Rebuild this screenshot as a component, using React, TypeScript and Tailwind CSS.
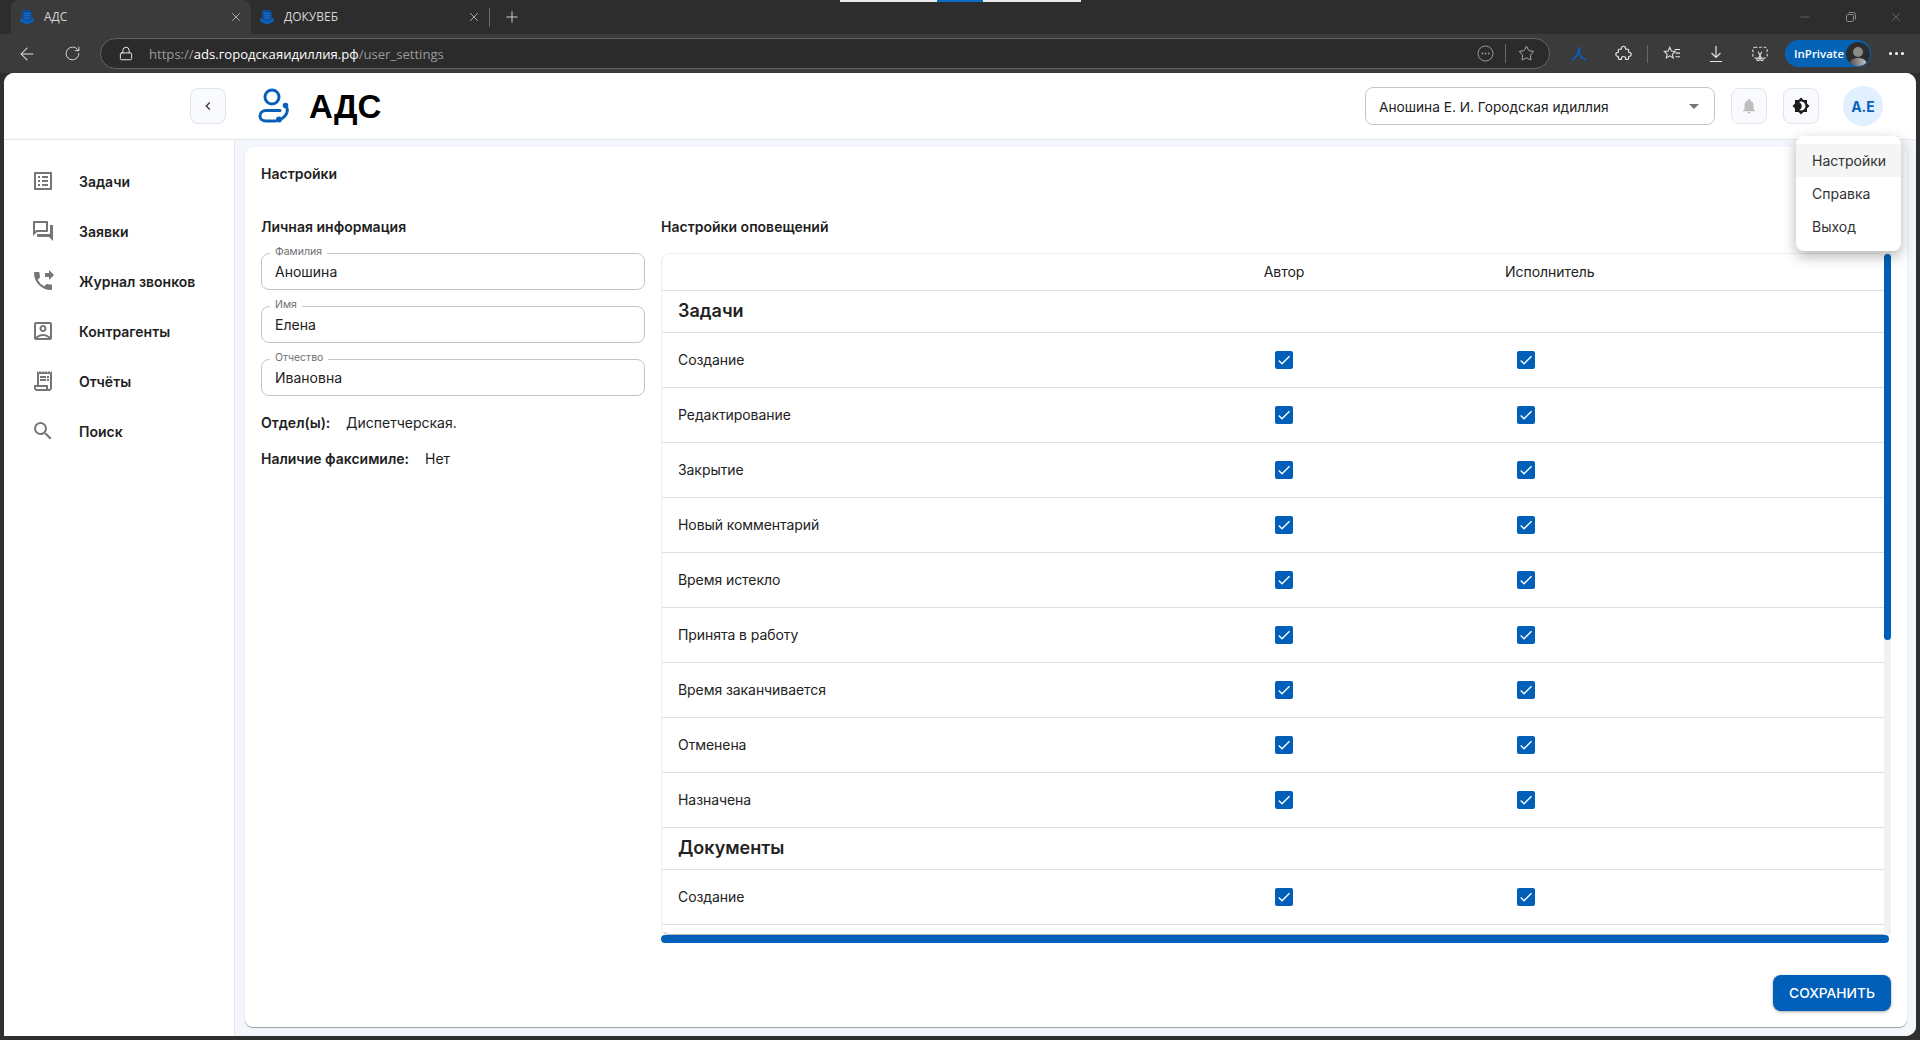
import React from "react";
import { ArrowLeft, RotateCw, Lock, Star, X, Plus, Minus } from "lucide-react";
import {
  MdOutlineListAlt,
  MdOutlineQuestionAnswer,
  MdPhoneForwarded,
  MdOutlineAccountBox,
  MdOutlineReceiptLong,
  MdSearch,
  MdChevronLeft,
  MdNotifications,
  MdBrightness4,
  MdArrowDropDown,
  MdCheck,
} from "react-icons/md";

const Favicon = () => (
  <svg width="16" height="16" viewBox="0 0 16 16" className="shrink-0">
    <path d="M1.500 8.500V12.800L8 15.500 14.500 12.800V8.500L8 11.500z" fill="#0a62ba" />
    <path d="M3 1h7.500L13 3.500V10.500L8 12.600 3 10.500z" fill="#0b4f9e" />
    <path d="M5 4.500h6M5 6.800h6M5 9.100h6" stroke="#2f7fce" strokeWidth="0.8" />
  </svg>
);

const Tab = ({ title, active }: { title: string; active?: boolean }) => (
  <div className={`flex h-full w-[240px] items-center pl-[8px] ${active ? "rounded-t-lg bg-[#3b3b3b] pr-[8px]" : "pr-[10px]"}`}>
    <Favicon />
    <span className="ml-[9px] flex-1 text-[12px] text-[#d6d6d6]">{title}</span>
    <X size={14} strokeWidth={1.25} className="text-[#d6d6d6]" />
  </div>
);

const TabBar = () => (
  <div className="relative flex h-[34px] shrink-0 items-stretch bg-[#2d2d2d] pl-[11px]">
    <Tab title="АДС" active />
    <Tab title="ДОКУВЕБ" />
    <div className="ml-[-2px] mt-[8px] h-[19px] w-px bg-[#6a6a6a]" />
    <div className="ml-[13px] flex items-center">
      <Plus size={18} strokeWidth={1.25} className="text-[#d8d8d8]" />
    </div>
    <div className="flex-1" />
    <div className="flex w-[138px] items-center text-[#8c8c8c]">
      <div className="flex w-[46px] justify-center">
        <Minus size={14} strokeWidth={1} />
      </div>
      <div className="flex w-[46px] justify-center">
        <svg width="12" height="12" viewBox="0 0 12 12" fill="none" stroke="currentColor">
          <rect x="1.5" y="3.5" width="7" height="7" rx="1" />
          <path d="M3.5 1.5h5a2 2 0 0 1 2 2v5" />
        </svg>
      </div>
      <div className="flex w-[46px] justify-center pr-[2px]">
        <X size={14} strokeWidth={1} />
      </div>
    </div>
    <div className="absolute left-[840px] top-0 flex h-[2px] w-[241px] bg-[#e8e8e8]">
      <div className="ml-[97px] h-full w-[46px] bg-[#0a6cc4]" />
    </div>
  </div>
);

const ToolSlot = ({ children }: { children: React.ReactNode }) => (
  <div className="flex w-[44px] shrink-0 items-center justify-center text-[#e4e4e4]">{children}</div>
);

const Toolbar = () => (
  <div className="flex h-[39px] shrink-0 items-center bg-[#3b3b3b] pl-[10px]" style={{ fontFamily: "'Open Sans', sans-serif" }}>
    <div className="flex w-[34px] justify-center text-[#e4e4e4]">
      <ArrowLeft size={20} strokeWidth={1.25} />
    </div>
    <div className="ml-[10px] flex w-[36px] justify-center text-[#e4e4e4]">
      <RotateCw size={17} strokeWidth={1.25} />
    </div>
    <div className="ml-[10px] flex h-[31px] w-[1450px] shrink-0 items-center rounded-full border border-[#636363] bg-[#2b2b2b] pl-[17px] pr-[14px]">
      <Lock size={15} strokeWidth={1.5} className="w-[16px] text-[#efefef]" />
      <span className="ml-[15px] pt-[2px] text-[13.1px] text-[#9a9a9a]">
        https://<span className="text-white">ads.городскаяидиллия.рф</span>/user_settings
      </span>
      <div className="flex-1" />
      <svg width="17" height="17" viewBox="0 0 17 17" fill="none" className="text-[#9c9c9c]">
        <circle cx="8.5" cy="8.5" r="7.5" stroke="currentColor" />
        <circle cx="5.3" cy="8.5" r="0.9" fill="currentColor" />
        <circle cx="8.5" cy="8.5" r="0.9" fill="currentColor" />
        <circle cx="11.7" cy="8.5" r="0.9" fill="currentColor" />
      </svg>
      <div className="ml-[11px] h-[19px] w-px bg-[#6a6a6a]" />
      <Star size={17} strokeWidth={1.25} className="ml-[12px] text-[#bdbdbd]" />
    </div>
    <div className="ml-[7px]" />
    <ToolSlot>
      <svg width="16" height="16" viewBox="0 0 18 18" fill="none" stroke="#0a5cc0" strokeWidth="2" strokeLinecap="round">
        <path d="M1.500 15c3-1 5-4 6.500-7.500C9 5 8.500 2.500 9 2c.6-.5 1.500 2 .2 5.500" />
        <path d="M8.500 8c1.500 3 3.500 6 7.500 7" />
      </svg>
    </ToolSlot>
    <ToolSlot>
      <svg width="17" height="17" viewBox="0 0 20 20" fill="none" stroke="currentColor" strokeWidth="1.400" strokeLinejoin="round">
        <path d="M7.500 4a2.500 2.500 0 0 1 5 0v1H15a1 1 0 0 1 1 1v2.500h.500a2.500 2.500 0 0 1 0 5H16V16a1 1 0 0 1-1 1h-2.500v-1a2.500 2.500 0 0 0-5 0v1H5a1 1 0 0 1-1-1v-2.500h-.500a2.500 2.500 0 0 1 0-5H4V6a1 1 0 0 1 1-1h2.500z" />
      </svg>
    </ToolSlot>
    <div className="ml-[2px] mr-[2px] h-[18px] w-px bg-[#666]" />
    <ToolSlot>
      <svg width="18" height="16" viewBox="0 0 20 18" fill="none" stroke="currentColor" strokeWidth="1.200">
        <path d="M7.500 1.500l1.800 4.200 4.400.4-3.300 3 1 4.400-3.900-2.400-3.900 2.400 1-4.400-3.300-3 4.400-.4z" />
        <path d="M13 4h6M14 8h5M14 12h5" />
      </svg>
    </ToolSlot>
    <ToolSlot>
      <svg width="16" height="18" viewBox="0 0 16 18" fill="none" stroke="currentColor" strokeWidth="1.2">
        <path d="M8 1v11M3.500 8L8 12.500 12.500 8M2 16.500h12" />
      </svg>
    </ToolSlot>
    <ToolSlot>
      <svg width="16" height="16" viewBox="0 0 18 18" fill="none" stroke="currentColor" strokeWidth="1.200">
        <rect x="1" y="1.500" width="16" height="12" rx="2" strokeDasharray="3 2" />
        <circle cx="6.800" cy="15" r="1.500" />
        <circle cx="11.200" cy="15" r="1.500" />
        <path d="M7.500 13.700L11 6.500M10.500 13.700L7 6.500" />
      </svg>
    </ToolSlot>
    <div className="ml-[3px] flex h-[27px] w-[86px] shrink-0 items-center rounded-full bg-[#0563b6] pl-[9px] pr-[1px]">
      <span className="flex-1 text-[11.5px] font-semibold text-white">InPrivate</span>
      <div className="flex h-[24px] w-[24px] items-end justify-center overflow-hidden rounded-full bg-[#2c2c2c]">
        <svg width="20" height="22" viewBox="0 0 20 22">
          <defs>
            <linearGradient id="pg" x1="0" x2="1" y1="0" y2="0">
              <stop offset="0" stopColor="#4a4a4a" />
              <stop offset="1" stopColor="#c9c9c9" />
            </linearGradient>
          </defs>
          <circle cx="10" cy="8" r="5" fill="#8a8a86" />
          <path d="M1 22c0-6 4-8 9-8s9 2 9 8z" fill="url(#pg)" />
        </svg>
      </div>
    </div>
    <div className="ml-[3px] flex w-[44px] shrink-0 items-center justify-center gap-[3px]">
      <span className="h-[3px] w-[3px] rounded-full bg-white" />
      <span className="h-[3px] w-[3px] rounded-full bg-white" />
      <span className="h-[3px] w-[3px] rounded-full bg-white" />
    </div>
  </div>
);

const Logo = () => (
  <svg width="36" height="36" viewBox="0 0 36 36" fill="none" stroke="#0a60b8" className="shrink-0">
    <circle cx="14" cy="9" r="7" strokeWidth="3" />
    <path d="M22 22.500H8C4.500 22.500 2 25 2 28c0 3 2.500 5 6 5h9.500" strokeWidth="3" strokeLinecap="round" />
    <path d="M27.500 18c3.500 3.500 2 10.500-6.500 14" strokeWidth="3" strokeLinecap="round" />
    <circle cx="27.500" cy="17.500" r="2.800" fill="#0a60b8" stroke="none" />
    <circle cx="21" cy="31.500" r="3" fill="#0a60b8" stroke="none" />
  </svg>
);

const IconButton = ({ children }: { children: React.ReactNode }) => (
  <button className="flex h-[36px] w-[36px] shrink-0 items-center justify-center rounded-lg border border-[#e1e4ec] bg-[#f9fafd]">
    {children}
  </button>
);

const Header = () => (
  <header className="flex h-[67px] shrink-0 items-center border-b border-[#e4e6ea] bg-white pl-[186px] pr-[33px]">
    <IconButton>
      <MdChevronLeft size={16} className="text-[#333]" />
    </IconButton>
    <div className="ml-[32px]">
      <Logo />
    </div>
    <span className="ml-[15px] text-[33px] font-bold leading-none text-black" style={{ fontFamily: "'Liberation Sans', sans-serif" }}>
      АДС
    </span>
    <div className="flex-1" />
    <div className="flex h-[38px] w-[350px] items-center rounded-lg border border-[#c4c4c4] bg-white pl-[13px] pr-[8px] text-[13.7px] text-[#222]">
      <span className="flex-1 pt-[3px]">Аношина Е. И. Городская идиллия</span>
      <MdArrowDropDown size={24} className="text-[#757575]" />
    </div>
    <div className="ml-[16px]">
      <IconButton>
        <MdNotifications size={18} className="text-[#bdbdbd]" />
      </IconButton>
    </div>
    <div className="ml-[16px]">
      <IconButton>
        <MdBrightness4 size={18} className="text-[#1c1c1c]" />
      </IconButton>
    </div>
    <div className="ml-[24px] flex h-[40px] w-[40px] items-center justify-center rounded-full bg-[#e1f0ff] text-[14px] font-bold text-[#0a60b8]">
      A.E
    </div>
  </header>
);

const navItems = [
  { label: "Задачи", icon: MdOutlineListAlt },
  { label: "Заявки", icon: MdOutlineQuestionAnswer },
  { label: "Журнал звонков", icon: MdPhoneForwarded },
  { label: "Контрагенты", icon: MdOutlineAccountBox },
  { label: "Отчёты", icon: MdOutlineReceiptLong },
  { label: "Поиск", icon: MdSearch },
];

const Sidebar = () => (
  <aside className="w-[231px] shrink-0 border-r border-[#e6e8ec] bg-white pt-[16px]">
    {navItems.map(({ label, icon: Icon }) => (
      <div key={label} className="flex h-[50px] items-center gap-[24px] pl-[27px]">
        <Icon size={24} className="shrink-0 text-[#757575]" />
        <span className="text-[14px] font-semibold text-[#1f1f1f]">{label}</span>
      </div>
    ))}
  </aside>
);

const Field = ({ label, value }: { label: string; value: string }) => (
  <fieldset className="h-[44px] rounded-lg border border-[#c4c4c4]">
    <legend className="ml-[8px] px-[5px] pb-[2px] text-[10.5px] leading-[12px] text-[#6f6f6f]">{label}</legend>
    <div className="h-[29px] pl-[13px] text-[14px] leading-[24px] text-[#222]">{value}</div>
  </fieldset>
);

const Check = () => (
  <div className="flex h-[18px] w-[18px] items-center justify-center rounded-[2px] bg-[#005fb8]">
    <MdCheck size={16} className="text-white" />
  </div>
);

const Row = ({ label }: { label: string }) => (
  <div className="grid h-[55px] grid-cols-[502px_240px_1fr] items-center border-b border-[#e0e0e0] text-[14px] tracking-[-0.07px] text-[#222]">
    <span className="pb-[2px] pl-[16px]">{label}</span>
    <div className="flex justify-center">
      <Check />
    </div>
    <div className="pl-[113px]">
      <Check />
    </div>
  </div>
);

const Section = ({ label }: { label: string }) => (
  <div className="flex h-[42px] items-center border-b border-[#e0e0e0] pb-[2px] pl-[16px] text-[18px] font-semibold text-[#222]">{label}</div>
);

const taskRows = [
  "Создание",
  "Редактирование",
  "Закрытие",
  "Новый комментарий",
  "Время истекло",
  "Принята в работу",
  "Время заканчивается",
  "Отменена",
  "Назначена",
];

const NotificationTable = () => (
  <div className="flex h-[682px] items-stretch">
    <div className="flex-1 overflow-hidden rounded-t-lg rounded-bl-lg border-b border-l border-t border-[#eeeeee] border-b-[#b5b5b5]">
      <div className="grid h-[37px] grid-cols-[502px_240px_1fr] items-center border-b border-[#e0e0e0] pb-[2px] text-[14px] tracking-[-0.05px] text-[#222]">
        <span />
        <span className="text-center">Автор</span>
        <span className="pl-[101px]">Исполнитель</span>
      </div>
      <Section label="Задачи" />
      {taskRows.map((r) => (
        <Row key={r} label={r} />
      ))}
      <Section label="Документы" />
      <Row label="Создание" />
    </div>
    <div className="w-[7px] bg-[#f1f1f1] pt-px">
      <div className="h-[386px] rounded-full bg-[#005fb8]" />
    </div>
  </div>
);

const Settings = () => (
  <div className="flex min-w-0 flex-1 flex-col rounded-lg bg-white px-[16px] pb-[16px] pt-[17px] shadow-[0_1px_1px_rgba(0,0,0,0.35)]">
    <h1 className="text-[14px] font-semibold leading-[20px] text-[#1f1f1f]">Настройки</h1>
    <div className="mt-[33px] flex gap-[16px]">
      <div className="w-[384px] shrink-0">
        <h2 className="text-[14px] font-semibold leading-[20px] text-[#1f1f1f]">Личная информация</h2>
        <div className="mt-[9px] flex flex-col gap-[9px]">
          <Field label="Фамилия" value="Аношина" />
          <Field label="Имя" value="Елена" />
          <Field label="Отчество" value="Ивановна" />
        </div>
        <div className="mt-[17px] flex text-[14px] leading-[20px] text-[#222]">
          <span className="w-[85px] font-semibold">Отдел(ы):</span>
          <span>Диспетчерская.</span>
        </div>
        <div className="mt-[16px] flex text-[14px] leading-[20px] text-[#222]">
          <span className="w-[164px] font-semibold">Наличие факсимиле:</span>
          <span>Нет</span>
        </div>
      </div>
      <div className="min-w-0 flex-1">
        <h2 className="text-[14px] font-semibold leading-[20px] text-[#1f1f1f]">Настройки оповещений</h2>
        <div className="mt-[16px]">
          <NotificationTable />
          <div className="mr-[2px] h-[8px] rounded-full bg-[#005fb8]" />
        </div>
      </div>
    </div>
    <div className="mt-[32px] flex justify-end">
      <button className="h-[36px] w-[118px] rounded-lg bg-[#005fb8] text-[13.75px] font-medium text-white shadow-[0_1px_3px_rgba(0,0,0,0.35)]">
        СОХРАНИТЬ
      </button>
    </div>
  </div>
);

const Menu = () => (
  <div className="absolute left-[1792px] top-[63px] w-[105px] rounded-lg bg-white py-[8px] text-[14px] text-[#333] shadow-[0_5px_14px_rgba(0,0,0,0.3)]">
    <div className="flex h-[33px] items-center bg-[#f5f5f5] pl-[16px]">Настройки</div>
    <div className="flex h-[33px] items-center pl-[16px]">Справка</div>
    <div className="flex h-[33px] items-center pl-[16px]">Выход</div>
  </div>
);

export default function App() {
  return (
    <div className="flex h-screen flex-col overflow-hidden bg-[#2f2f2f]" style={{ fontFamily: "'Open Sans', sans-serif" }}>
      <TabBar />
      <Toolbar />
      <div
        className="relative ml-[4px] mr-[4px] flex min-h-0 flex-1 flex-col overflow-hidden rounded-t-[10px] rounded-br-[10px] bg-white"
        style={{ fontFamily: "Inter, sans-serif" }}
      >
        <Header />
        <div className="flex min-h-0 flex-1">
          <Sidebar />
          <main className="flex min-w-0 flex-1 bg-[#f3f6fb] pb-[9px] pl-[10px] pr-[9px] pt-[7px]">
            <Settings />
          </main>
        </div>
        <Menu />
      </div>
      <div className="h-[4px] shrink-0" />
    </div>
  );
}
